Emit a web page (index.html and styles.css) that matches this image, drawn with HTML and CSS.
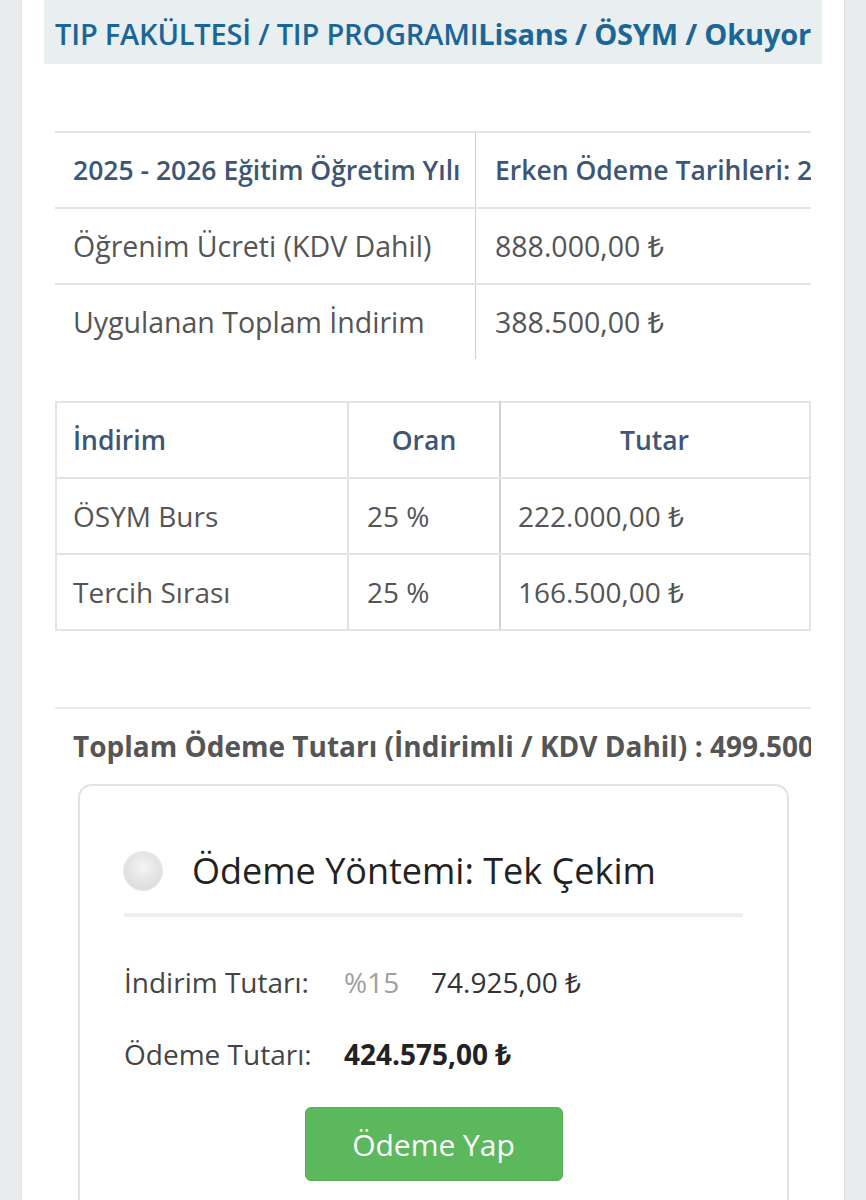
FILE: index.html
```html
<!DOCTYPE html>
<html lang="tr">
<head>
<meta charset="utf-8">
<title>Ödeme</title>
<link rel="stylesheet" href="styles.css">
</head>
<body>
<div class="page">
  <div class="header"><span class="fac">TIP FAKÜLTESİ / TIP PROGRAMI</span><b>Lisans / ÖSYM / Okuyor</b></div>
  <div class="content">
    <div class="scroll">
      <div class="t1">
        <div class="r head"><div class="c1">2025 - 2026 Eğitim Öğretim Yılı</div><div class="c2">Erken Ödeme Tarihleri: 2025-08-01</div></div>
        <div class="r"><div class="c1">Öğrenim Ücreti (KDV Dahil)</div><div class="c2">888.000,00 ₺</div></div>
        <div class="r last"><div class="c1">Uygulanan Toplam İndirim</div><div class="c2">388.500,00 ₺</div></div>
      </div>
    </div>
    <table class="t2">
      <tr class="head"><td class="d1">İndirim</td><td class="d2 center">Oran</td><td class="d3 center">Tutar</td></tr>
      <tr><td class="d1">ÖSYM Burs</td><td class="d2">25 %</td><td class="d3">222.000,00 ₺</td></tr>
      <tr><td class="d1">Tercih Sırası</td><td class="d2">25 %</td><td class="d3">166.500,00 ₺</td></tr>
    </table>
    <div class="total">Toplam Ödeme Tutarı (İndirimli / KDV Dahil) : 499.500,00 ₺</div>
    <div class="card">
      <div class="method">
        <span class="radio"></span>
        <span class="method-title">Ödeme Yöntemi: Tek Çekim</span>
      </div>
      <div class="row first"><span class="lbl">İndirim Tutarı:</span><span class="pct">%15</span><span class="val">74.925,00 ₺</span></div>
      <div class="row second"><span class="lbl">Ödeme Tutarı:</span><span class="val strong">424.575,00 ₺</span></div>
      <div class="btn-wrap"><button class="btn">Ödeme Yap</button></div>
    </div>
  </div>
</div>
</body>
</html>
```
FILE: styles.css
```css
html, body {
  margin: 0;
  padding: 0;
}
body {
  background: #e8ecef;
  font-family: "Open Sans", "Noto Sans", "DejaVu Sans", sans-serif;
  color: #555;
  height: 1200px;
  overflow: hidden;
}
.page {
  margin: 0 22px;
  background: #fff;
  min-height: 1200px;
  padding: 0 22px;
  box-shadow: -1px 0 0 #dfe3e6, 1px 0 0 #dfe3e6;
}
.header {
  background: #e9eef0;
  height: 64px;
  box-sizing: border-box;
  padding-top: 3px;
  display: flex;
  align-items: center;
  justify-content: center;
  white-space: nowrap;
  overflow: hidden;
  color: #1b6699;
  font-size: 29px;
  letter-spacing: -0.2px;
}
.header .fac {
  font-weight: 600;
}
.header b {
  font-weight: 700;
}
.content {
  margin: 0 11px;
  padding-top: 67px;
}
.scroll {
  overflow: hidden;
}
.t1 {
  width: 1100px;
  border-top: 2px solid #e4e4e4;
}
.t1 .r {
  display: grid;
  grid-template-columns: 421px 1fr;
  height: 76px;
  border-bottom: 2px solid #e4e4e4;
  box-sizing: border-box;
  white-space: nowrap;
  font-size: 28.5px;
  color: #555;
}
.t1 .r.last {
  border-bottom: none;
  height: 74px;
}
.t1 .c1, .t1 .c2 {
  display: flex;
  align-items: center;
}
.t1 .c1 {
  padding-left: 18px;
  border-right: 1px solid #cfcfcf;
}
.t1 .c2 {
  padding-left: 19px;
}
.t1 .r.head, .t2 tr.head td {
  color: #3d5676;
  font-weight: 600;
  font-size: 26.5px;
}
table {
  border-collapse: collapse;
  white-space: nowrap;
}
.t2 {
  margin-top: 42px;
  width: 756px;
  table-layout: fixed;
  border: 2px solid #e4e4e4;
}
.t2 td {
  height: 74px;
  padding: 0 18px;
  font-size: 28px;
  color: #555;
  border: 2px solid #e4e4e4;
}
.t2 td.d1 { width: 256px; padding-left: 16px; }
.t2 td.d2 { width: 114px; border-left-color: #d2d2d2; border-right-color: #d2d2d2; }
.t2 td.d3 { padding-left: 17px; }
.t2 td.center {
  text-align: center;
}
.total {
  margin-top: 76px;
  border-top: 2px solid #ececec;
  padding: 18px 0 0 18px;
  font-size: 28px;
  font-weight: 700;
  color: #555;
  white-space: nowrap;
  overflow: hidden;
  height: 57px;
  box-sizing: content-box;
}
.card {
  margin: 0 22px 0 23px;
  border: 2px solid #e2e2e2;
  border-bottom: none;
  border-radius: 14px 14px 0 0;
  padding: 0 44px 40px 44px;
}
.method {
  display: flex;
  align-items: center;
  gap: 30px;
  padding: 60px 0 18px 0;
  border-bottom: 4px solid #eeeeee;
}
.radio {
  width: 38px;
  height: 38px;
  border-radius: 50%;
  background: radial-gradient(circle at 50% 40%, #f4f4f4 0%, #dcdcdc 75%, #cfcfcf 100%);
  box-shadow: 0 0 0 1px #e6e6e6;
  flex: none;
}
.method-title {
  font-size: 36px;
  color: #222;
}
.row {
  display: flex;
  align-items: baseline;
  font-size: 28px;
  color: #444;
  white-space: nowrap;
}
.row.first {
  margin-top: 46px;
}
.row.second {
  margin-top: 34px;
}
.lbl {
  width: 220px;
}
.pct {
  color: #a0a0a0;
  width: 87px;
}
.val {
  color: #333;
}
.val.strong {
  font-weight: 700;
  color: #222;
}
.btn-wrap {
  display: flex;
  justify-content: center;
  margin-top: 34px;
}
.btn {
  width: 258px;
  height: 74px;
  background: #5cb85c;
  border: 1px solid #55ad55;
  border-radius: 6px;
  color: #fff;
  font-family: "Open Sans", "Noto Sans", "DejaVu Sans", sans-serif;
  font-size: 30px;
  padding: 0;
}
```
